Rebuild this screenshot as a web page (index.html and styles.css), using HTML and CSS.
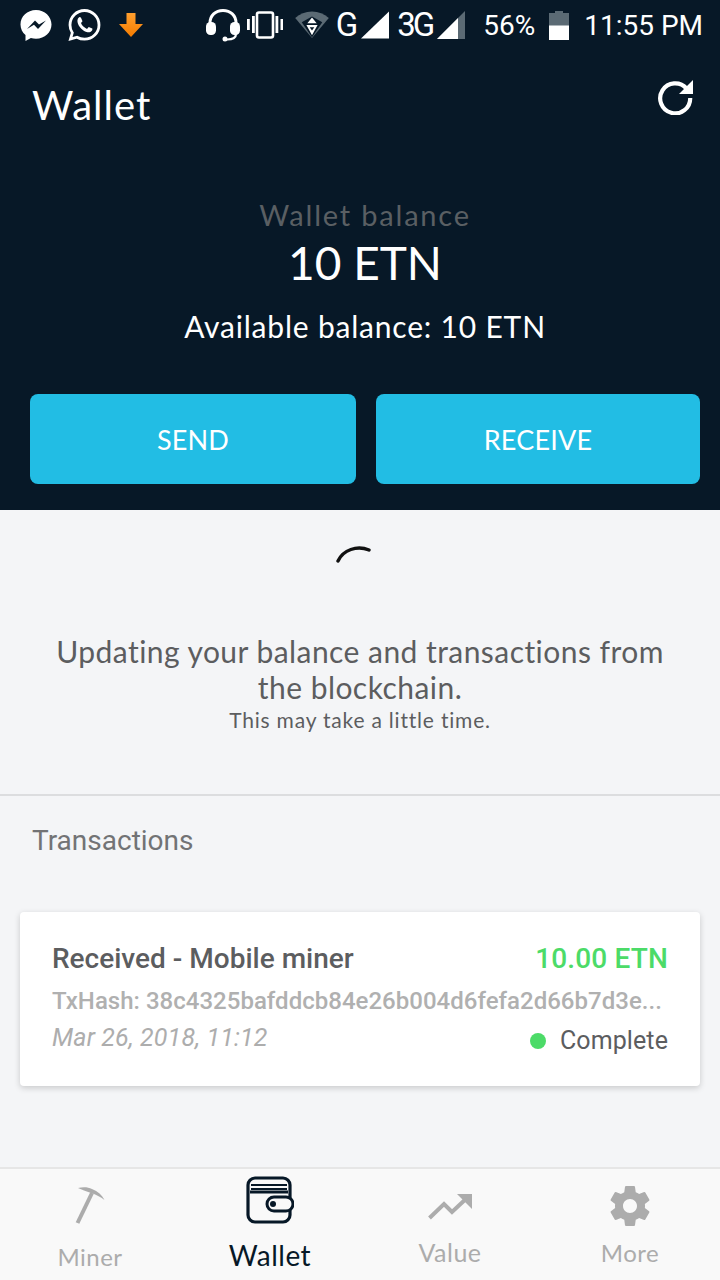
FILE: index.html
```html
<!DOCTYPE html>
<html lang="en">
<head>
<meta charset="utf-8">
<title>Wallet</title>
<link rel="stylesheet" href="styles.css">
</head>
<body>
<div class="app">
  <header class="head">
    <div class="status">
      <div class="status-left">
        <svg class="si" width="32" height="32" viewBox="0 0 32 32"><path fill="#fff" d="M16 1C7.2 1 .5 7.4.5 15.500c0 4.300 1.900 8 5 10.500v6l5.400-3c1.600.5 3.300.7 5.100.7 8.800 0 15.500-6.400 15.500-14.200S24.800 1 16 1z"/><path fill="#071827" d="M7 20l8-8.600 4 4.100 7-4.100-8 8.600-4-4.200z"/></svg>
        <svg class="si" width="34" height="34" viewBox="0 0 34 34"><path fill="none" stroke="#fff" stroke-width="2.800" d="M17.500 2.500C9.500 2.500 3 9 3 17c0 2.900.8 5.500 2.300 7.800L3.500 31l6.500-1.800c2.200 1.300 4.800 2 7.500 2 8 0 14.500-6.300 14.500-14.200S25.500 2.500 17.500 2.500z"/><path fill="#fff" d="M12.500 9c-1.300.6-2.400 2.500-2 5 .8 4.600 5.400 9.400 10 10.200 2.200.3 4-.5 4.700-2 .3-.8.300-1.400.1-1.600l-3.600-1.700-1.700 2c-2.700-1-5-3.100-6-5.800l1.500-1.800-1.600-3.800z"/></svg>
        <svg class="si dl" width="24" height="26" viewBox="0 0 24 26"><defs><linearGradient id="dlg" x1="0" y1="0" x2="0" y2="1"><stop offset="0" stop-color="#ff9f2e"/><stop offset="1" stop-color="#f57c00"/></linearGradient></defs><path fill="url(#dlg)" d="M7.500 1h9v11H24L12 25 0 12h7.500z"/></svg>
      </div>
      <div class="status-right">
        <svg class="si" width="36" height="34" viewBox="0 0 36 34"><path fill="none" stroke="#fff" stroke-width="3" d="M5 18v-3C5 7.500 10.500 2.500 18 2.500S31 7.500 31 15v3"/><rect fill="#fff" x="1" y="14" width="10" height="13" rx="4.500"/><rect fill="#fff" x="25" y="14" width="10" height="13" rx="4.500"/><path fill="none" stroke="#fff" stroke-width="2.200" d="M31 26c0 3.500-3 5.500-9 5.500"/><circle fill="#fff" cx="20" cy="31" r="2.500"/></svg>
        <svg class="si" width="36" height="28" viewBox="0 0 36 28"><rect x="10" y="1.500" width="16" height="25" rx="2" fill="none" stroke="#fff" stroke-width="2.600"/><rect x="0" y="8" width="2.800" height="11" fill="#fff"/><rect x="5" y="5" width="2.800" height="17" fill="#fff"/><rect x="28.500" y="5" width="2.800" height="17" fill="#fff"/><rect x="33.500" y="8" width="2.800" height="11" fill="#fff"/></svg>
        <svg class="si wifi" width="34" height="28" viewBox="0 0 36 30"><path fill="#5b6a74" d="M0 7.500C5 3 11 .5 18 .5S31 3 36 7.500L18 29z"/><path fill="#071827" d="M7 12l11-6 11 6-11 16z"/><path fill="#fff" d="M18 7l5 6H13zM12 15h12l-6 11z"/><path fill="#071827" d="M15.500 17.500h5L18 21z"/></svg>
        <span class="net g">G</span>
        <svg class="si sig" width="28" height="28" viewBox="0 0 29 28"><path fill="#fff" d="M29 0v28H0z"/></svg>
        <span class="net three">3G</span>
        <svg class="si sig2" width="29" height="28" viewBox="0 0 29 28"><path fill="#5b6a74" d="M28 0v28H0z"/><path fill="#fff" d="M21 7v21H0z"/></svg>
        <span class="pct">56%</span>
        <svg class="si batt" width="20" height="29" viewBox="0 0 20 29"><path fill="#5b6a74" d="M6 0h8v2h6v14H0V2h6z"/><rect y="14.500" width="20" height="14.500" fill="#fff"/></svg>
        <span class="time">11:55 PM</span>
      </div>
    </div>
    <div class="bar">
      <h1 class="title">Wallet</h1>
      <svg class="refresh" width="36" height="36" viewBox="0 0 36 36"><path fill="none" stroke="#fff" stroke-width="4.200" d="M28.500 9.500A15 15 0 1 0 32.200 19"/><path fill="#fff" d="M35 1v14H21z"/></svg>
    </div>
    <div class="bal">
      <div class="bal-label">Wallet balance</div>
      <div class="bal-value">10 ETN</div>
      <div class="bal-avail">Available balance: 10 ETN</div>
    </div>
    <div class="actions">
      <button class="btn btn-send">SEND</button>
      <button class="btn btn-recv">RECEIVE</button>
    </div>
  </header>
  <main class="main">
    <section class="sync">
      <svg class="spin" width="40" height="24" viewBox="0 0 40 24"><path fill="none" stroke="#111" stroke-width="3.400" stroke-linecap="round" d="M2 19C7 8 21 3 33 8"/></svg>
      <p class="sync-main">Updating your balance and transactions from the blockchain.</p>
      <p class="sync-sub">This may take a little time.</p>
    </section>
    <section class="tx">
      <h2 class="tx-title">Transactions</h2>
      <article class="card">
        <div class="row row-top">
          <span class="tx-name">Received - Mobile miner</span>
          <span class="tx-amt">10.00 ETN</span>
        </div>
        <div class="tx-hash">TxHash: 38c4325bafddcb84e26b004d6fefa2d66b7d3e...</div>
        <div class="row row-bottom">
          <span class="tx-date">Mar 26, 2018, 11:12</span>
          <span class="tx-state"><i class="dot"></i>Complete</span>
        </div>
      </article>
    </section>
  </main>
  <nav class="nav">
    <a class="tab tab-miner">
      <svg width="30" height="38" viewBox="0 0 30 38"><path fill="none" stroke="#acacac" stroke-width="4" d="M2.500 37L17 7"/><path fill="#acacac" d="M3 2c5-1.300 10-1 14 1 6 2.500 10 6 12.500 11-4-3-8.500-5.500-13.500-7L9 4.500z"/></svg>
      <span>Miner</span>
    </a>
    <a class="tab tab-wallet">
      <svg width="48" height="48" viewBox="0 0 48 48"><rect x="2" y="2" width="42" height="44" rx="7" fill="#f9f9f9" stroke="#071827" stroke-width="3.200"/><path fill="none" stroke="#071827" stroke-width="1.800" d="M5 9h36M5 13h36"/><path fill="none" stroke="#071827" stroke-width="3" d="M4 16h38"/><rect x="21" y="21" width="26" height="14" rx="7" fill="#f9f9f9" stroke="#071827" stroke-width="3"/><circle cx="27" cy="28" r="3" fill="#071827"/></svg>
      <span>Wallet</span>
    </a>
    <a class="tab tab-value">
      <svg width="44" height="26" viewBox="0 0 44 26"><path fill="none" stroke="#acacac" stroke-width="4" d="M1.500 24L16 10l8 8L40 3"/><path fill="#acacac" d="M29 0h15v15z"/></svg>
      <span>Value</span>
    </a>
    <a class="tab tab-more">
      <svg width="48" height="48" viewBox="0 0 24 24"><path fill="#acacac" d="M19.430 12.980c.04-.32.070-.64.070-.98s-.03-.66-.07-.98l2.110-1.650c.19-.15.240-.42.120-.64l-2-3.460c-.12-.22-.39-.3-.61-.22l-2.490 1c-.52-.4-1.080-.73-1.690-.98l-.38-2.650C14.460 2.180 14.250 2 14 2h-4c-.25 0-.46.180-.49.420l-.38 2.650c-.61.25-1.170.59-1.690.98l-2.490-1c-.23-.09-.49 0-.61.220l-2 3.460c-.13.220-.07.490.12.640l2.110 1.650c-.04.32-.07.650-.07.980s.03.660.07.980l-2.110 1.650c-.19.150-.24.420-.12.640l2 3.460c.12.220.39.300.61.220l2.490-1c.52.400 1.080.730 1.690.980l.38 2.650c.03.240.24.420.49.420h4c.25 0 .46-.18.49-.42l.38-2.650c.61-.25 1.170-.59 1.690-.98l2.490 1c.23.090.49 0 .61-.22l2-3.460c.12-.22.070-.49-.12-.64l-2.110-1.650zM12 15.500c-1.930 0-3.500-1.570-3.500-3.500s1.570-3.500 3.500-3.500 3.500 1.570 3.500 3.500-1.570 3.500-3.500 3.500z"/></svg>
      <span>More</span>
    </a>
  </nav>
</div>
</body>
</html>
```

FILE: styles.css
```css
* { box-sizing: border-box; }
html, body { margin: 0; padding: 0; }
body { width: 720px; height: 1280px; overflow: hidden; font-family: "Lato", "Noto Sans", sans-serif; background: #f4f5f7; }
.app { display: flex; flex-direction: column; height: 1280px; }

.head { height: 510px; background: #071827; color: #fff; flex: none; display: flex; flex-direction: column; }
.status { height: 48px; display: flex; justify-content: space-between; align-items: center; padding: 2px 17px 0 20px; flex: none; }
.status-left, .status-right { display: flex; align-items: center; }
.si { display: block; flex: none; }
.status-left { gap: 15px; }
.dl { margin-left: 3px; }
.status-right { font-family: "Roboto", sans-serif; font-size: 28px; color: #fff; }
.status-right .si:first-child { margin-right: 6px; }
.wifi { margin-left: 12px; }
.net { font-family: "Roboto", sans-serif; font-weight: 400; font-size: 33px; line-height: 34px; }
.g { margin-left: 7px; }
.three { margin-left: 8px; letter-spacing: -3px; }
.sig { margin-left: 3px; }
.sig2 { margin-left: 5px; }
.pct { margin-left: 17px; }
.batt { margin-left: 14px; }
.time { margin-left: 15px; }

.bar { display: flex; justify-content: space-between; align-items: center; padding: 29px 26px 0 32px; height: 84px; flex: none; }
.title { margin: 0; font-size: 40px; line-height: 46px; font-weight: 400; letter-spacing: 1px; }
.refresh { display: block; margin-top: -16px; }

.bal { text-align: center; padding: 0 0 0 10px; margin-top: 65px; flex: none; }
.bal-label { font-size: 29px; line-height: 36px; color: #5a5f63; letter-spacing: 1.800px; }
.bal-value { font-size: 46px; line-height: 58px; margin-top: 1px; letter-spacing: 0; }
.bal-avail { font-size: 30px; line-height: 36px; margin-top: 16px; letter-spacing: .8px; }

.actions { display: flex; gap: 20px; padding: 0 20px 0 30px; margin-top: 50px; flex: none; }
.btn { height: 90px; border: 0; border-radius: 8px; background: #22bde4; color: #fff; font-family: inherit; font-size: 27px; letter-spacing: .2px; padding: 0; }
.btn-send { width: 326px; }
.btn-recv { width: 324px; }

.main { flex: 1; display: flex; flex-direction: column; min-height: 0; }
.sync { height: 286px; border-bottom: 2px solid #dcdddf; text-align: center; padding: 32px 40px 0; flex: none; }
.spin { display: block; margin: 0 0 0 296px; }
.sync-main { margin: 67px 0 0; font-size: 30px; line-height: 36px; color: #5c5d5f; letter-spacing: .45px; }
.sync-sub { margin: 1px 0 0; font-size: 21px; line-height: 28px; color: #5c5d5f; letter-spacing: .8px; }

.tx { padding: 0 20px; }
.tx-title { margin: 27px 0 0 12px; font-family: "Roboto", sans-serif; font-weight: 400; font-size: 28px; line-height: 36px; color: #727375; }
.card { margin-top: 53px; height: 174px; background: #fff; border-radius: 4px; box-shadow: 0 2px 6px rgba(0,0,0,.18); padding: 29px 32px 0; font-family: "Roboto", sans-serif; }
.row { display: flex; justify-content: space-between; align-items: flex-start; }
.tx-name { font-size: 28px; line-height: 36px; font-weight: 500; color: #5c5d5f; }
.tx-amt { font-size: 28px; line-height: 36px; font-weight: 500; color: #4cdb68; letter-spacing: .15px; }
.tx-hash { font-size: 24px; line-height: 30px; margin-top: 9px; color: #b0b0b0; font-weight: 500; letter-spacing: .02px; white-space: nowrap; }
.row-bottom { margin-top: 6px; }
.tx-date { font-size: 25px; line-height: 32px; font-style: italic; color: #adadad; font-weight: 400; letter-spacing: .15px; }
.tx-state { display: flex; align-items: center; margin-top: 3px; font-size: 25px; line-height: 32px; color: #5c5d5f; letter-spacing: .1px; }
.dot { width: 16px; height: 16px; border-radius: 50%; background: #4cdb68; margin-right: 14px; }

.nav { height: 113px; flex: none; background: #f9f9f9; border-top: 2px solid #e6e6e6; display: grid; grid-template-columns: repeat(4, 180px); }
.tab { display: flex; flex-direction: column; align-items: center; color: #acacac; font-size: 24px; line-height: 32px; letter-spacing: .5px; }
.tab svg { display: block; flex: none; }
.tab-miner { padding-top: 17px; }
.tab-miner span { margin-top: 17px; }
.tab-wallet { padding-top: 7px; color: #071827; font-size: 28px; }
.tab-wallet span { margin-top: 15px; }
.tab-value { padding-top: 25px; font-size: 25px; }
.tab-value span { margin-top: 16px; }
.tab-more { padding-top: 13px; }
.tab-more span { margin-top: 7px; }
```
